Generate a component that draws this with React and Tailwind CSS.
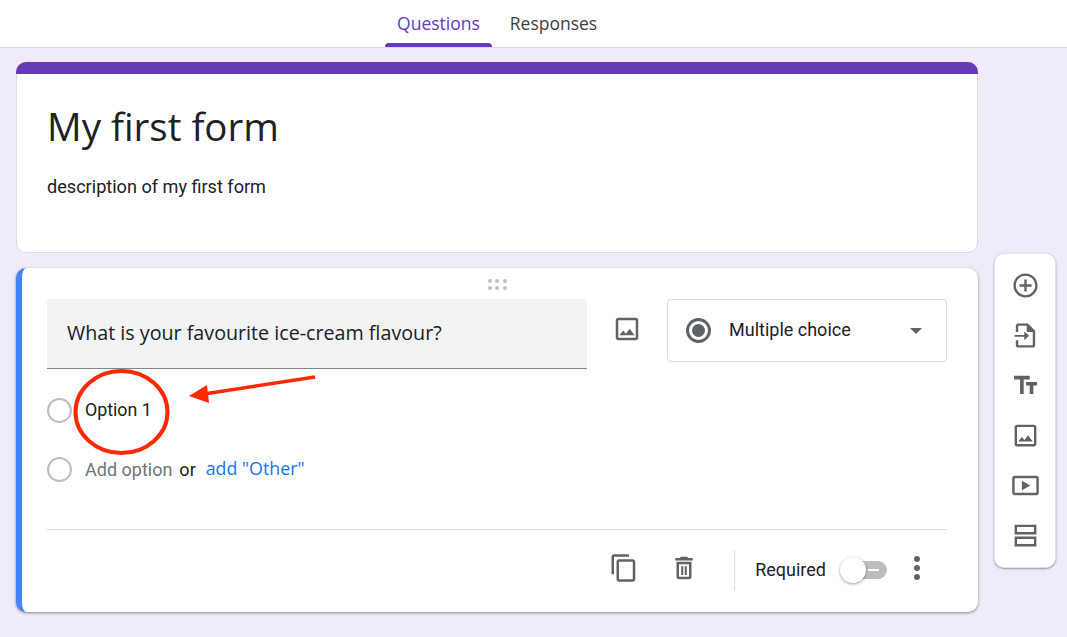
const ICON = "fill-[#5f6368]";

function Icon({ d, size = 29, className = "" }) {
  return (
    <svg width={size} height={size} viewBox="0 0 24 24" className={`${ICON} shrink-0 ${className}`}>
      <path d={d} />
    </svg>
  );
}

const paths = {
  add: "M13 7h-2v4H7v2h4v4h2v-4h4v-2h-4V7zm-1-5C6.48 2 2 6.48 2 12s4.48 10 10 10 10-4.48 10-10S17.52 2 12 2zm0 18c-4.41 0-8-3.59-8-8s3.59-8 8-8 8 3.59 8 8-3.59 8-8 8z",
  importQ: "M14 2H6c-1.1 0-2 .9-2 2v5h2V4h7v5h5v11H6v-4H4v4c0 1.1.9 2 2 2h12c1.1 0 2-.9 2-2V8l-6-6zM3 11.5v1.6h8v2.9l4-3.7-4-3.7v2.9H3z",
  title: "M2.5 4v3h5v12h3V7h5V4h-13zm19 5h-9v3h3v7h3v-7h3V9z",
  image: "M19 5v14H5V5h14m0-2H5c-1.1 0-2 .9-2 2v14c0 1.1.9 2 2 2h14c1.1 0 2-.9 2-2V5c0-1.1-.9-2-2-2zm-4.86 8.86l-3 3.87L9 13.14 6 17h12l-3.86-5.14z",
  video: "M21 4H3c-1.1 0-2 .9-2 2v12c0 1.1.9 2 2 2h18c1.1 0 2-.9 2-2V6c0-1.1-.9-2-2-2zm0 14H3V6h18v12zM9 8v8l7-4z",
  section: "M3 3h18v8.2H3V3zm2 2v4.2h14V5H5zM3 12.8h18V21H3v-8.2zm2 2V19h14v-4.2H5z",
  copy: "M16 1H4c-1.1 0-2 .9-2 2v14h2V3h12V1zm3 4H8c-1.1 0-2 .9-2 2v14c0 1.1.9 2 2 2h11c1.1 0 2-.9 2-2V7c0-1.1-.9-2-2-2zm0 16H8V7h11v14z",
  trash: "M6 19c0 1.1.9 2 2 2h8c1.1 0 2-.9 2-2V7H6v12zM8 9h8v10H8V9zm7.5-5l-1-1h-5l-1 1H5v2h14V4h-3.5zM9.8 10.5h1.6v7H9.8zM12.6 10.5h1.6v7h-1.6z",
};

function Radio() {
  return <div className="w-[25px] h-[25px] rounded-full border-2 border-[#bdbdbd] shrink-0" />;
}

function DragDots() {
  return (
    <div className="grid grid-cols-3 gap-[3px] w-[19px]">
      {[0, 1, 2, 3, 4, 5].map((i) => (
        <span key={i} className="w-[4px] h-[4px] rounded-full bg-[#bdc1c6]" />
      ))}
    </div>
  );
}

function Annotation() {
  return (
    <svg width="1067" height="637" className="absolute left-0 top-0 pointer-events-none">
      <ellipse cx="121.5" cy="412" rx="46" ry="41" fill="none" stroke="#fb2a05" strokeWidth="4" />
      <path d="M315 377L204 394" stroke="#fb2a05" strokeWidth="3.5" fill="none" />
      <path d="M189 396L207 385L209 403Z" fill="#fb2a05" />
    </svg>
  );
}

export default function App() {
  return (
    <div className="relative h-[637px] w-[1067px] overflow-hidden bg-[#f0ebf8] font-['Roboto',sans-serif]">
      <div className="h-[48px] bg-white border-b border-[#dadce0] flex justify-center pr-[67px]">
        <div className="flex h-[47px]">
          <div className="relative w-[107px] flex justify-center pt-[12px] text-[17.5px] leading-[22px] text-[#673ab7] font-['Open_Sans',sans-serif]">
            Questions
            <div className="absolute bottom-0 left-0 right-0 h-[4px] rounded-t-[4px] bg-[#673ab7]" />
          </div>
          <div className="w-[123px] flex justify-center pt-[12px] text-[17.5px] leading-[22px] text-[#3c4043] font-['Open_Sans',sans-serif]">
            Responses
          </div>
        </div>
      </div>

      <div className="flex items-start pl-[16px] pt-[14px] gap-[16px]">
        <div className="w-[962px] flex flex-col gap-[15px]">
          <div className="h-[191px] rounded-[10px] bg-white border border-[#dadce0]">
            <div className="h-[12px] -mx-px -mt-px rounded-t-[10px] bg-[#673ab7]" />
            <div className="pl-[30px] pt-[24px] text-[38.5px] leading-[56px] text-[#202124] font-['Open_Sans',sans-serif]">
              My first form
            </div>
            <div className="pl-[30px] pt-[21px] text-[18.1px] leading-[24px] text-[#202124]">
              description of my first form
            </div>
          </div>

          <div className="h-[344px] rounded-[10px] bg-white border-l-[6px] border-[#4285f4] shadow-[0_1px_3px_rgba(60,64,67,0.6)] pl-[25px] pr-[31px] flex flex-col">
            <div className="h-[31px] flex justify-center items-center pl-[1px] pt-[2px]">
              <DragDots />
            </div>
            <div className="flex">
              <div className="w-[540px] h-[70px] bg-[#f1f3f4] rounded-t-[4px] border-b border-[#80868b] pl-[20px] pt-[20px] text-[19.7px] leading-[28px] text-[#202124] font-['Open_Sans',sans-serif]">
                What is your favourite ice-cream flavour?
              </div>
              <div className="w-[80px] h-[60px] flex justify-center items-center">
                <Icon d={paths.image} size={30} />
              </div>
              <div className="w-[280px] h-[63px] rounded-[4px] border border-[#dadce0] flex items-center pl-[18px] pr-[24px]">
                <div className="w-[25px] h-[25px] rounded-full border-[3px] border-[#5f6368] flex items-center justify-center">
                  <div className="w-[13px] h-[13px] rounded-full bg-[#5f6368]" />
                </div>
                <span className="ml-[18px] pb-[2px] text-[18px] text-[#202124] flex-1">Multiple choice</span>
                <div className="w-0 h-0 border-x-[6px] border-x-transparent border-t-[6px] border-t-[#5f6368]" />
              </div>
            </div>

            <div className="flex items-center mt-[28px] h-[26px]">
              <Radio />
              <span className="ml-[13px] text-[17.8px] text-[#202124]">Option 1</span>
            </div>
            <div className="flex items-center mt-[33px] h-[26px]">
              <Radio />
              <span className="ml-[13px] text-[18px] text-[#70757a]">Add option</span>
              <span className="ml-[7px] text-[18px] text-[#202124]">or</span>
              <span className="ml-[10px] pb-[2px] text-[17.8px] font-medium text-[#1a73e8] font-['Open_Sans',sans-serif]">add "Other"</span>
            </div>

            <div className="mt-[47px] border-t border-[#dadce0] flex items-center justify-end h-[77px]">
              <Icon d={paths.copy} size={30} />
              <Icon d={paths.trash} size={30} className="ml-[30px]" />
              <div className="ml-[35px] mt-[4px] w-px h-[40px] bg-[#dadce0]" />
              <span className="ml-[20px] mt-[2px] text-[18px] text-[#202124]">Required</span>
              <div className="relative ml-[14px] mt-[4px] w-[47px] h-[26px] flex items-center">
                <div className="ml-[13px] w-[34px] h-[18px] rounded-full bg-[#bdbdbd] flex items-center justify-end pr-[8px]">
                  <div className="w-[11px] h-[2px] bg-white" />
                </div>
                <div className="absolute left-0 top-0 w-[26px] h-[26px] rounded-full bg-white shadow-[0_1px_3px_rgba(0,0,0,0.4)]" />
              </div>
              <div className="ml-[27px] mr-[27px] flex flex-col gap-[3px]">
                <span className="w-[6px] h-[6px] rounded-full bg-[#5f6368]" />
                <span className="w-[6px] h-[6px] rounded-full bg-[#5f6368]" />
                <span className="w-[6px] h-[6px] rounded-full bg-[#5f6368]" />
              </div>
            </div>
          </div>
        </div>

        <div className="mt-[191px] w-[62px] h-[315px] rounded-[10px] bg-white border border-[#e4e0ee] shadow-[0_1px_2px_rgba(60,64,67,0.5)] flex flex-col items-center pt-[17px] gap-[21px]">
          <Icon d={paths.add} />
          <Icon d={paths.importQ} />
          <Icon d={paths.title} />
          <Icon d={paths.image} />
          <Icon d={paths.video} />
          <Icon d={paths.section} />
        </div>
      </div>

      <Annotation />
    </div>
  );
}
